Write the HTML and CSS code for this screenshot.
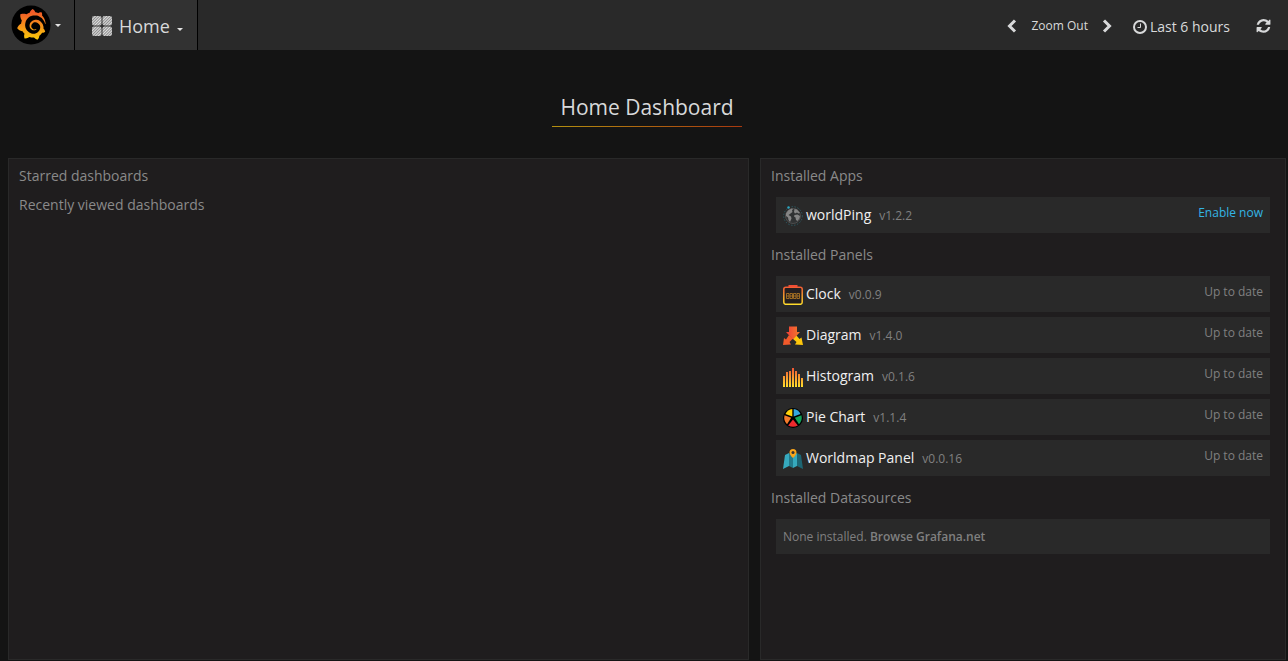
FILE: index.html
```html
<!DOCTYPE html>
<html lang="en">
<head>
<meta charset="utf-8">
<title>Home Dashboard</title>
<link rel="stylesheet" href="styles.css">
</head>
<body>
<header class="navbar">
  <button class="nav-item brand" type="button" aria-label="Main menu">
    <svg class="logo" viewBox="0 0 40 40">
      <defs><linearGradient id="flame" x1="0" y1="0" x2="0" y2="1"><stop offset=".1" stop-color="#f05a28"/><stop offset="1" stop-color="#fbca0a"/></linearGradient></defs>
      <circle cx="20" cy="20" r="19.5" fill="#000"/>
      <path transform="translate(5 4) scale(1.28)" fill="url(#flame)" d="M23.02 10.59a8.578 8.578 0 0 0-.862-3.034 8.911 8.911 0 0 0-1.789-2.445c.337-1.342-.413-2.505-.413-2.505-1.292-.08-2.113.4-2.416.62-.052-.02-.102-.044-.154-.064-.22-.089-.446-.172-.677-.247-.231-.073-.47-.14-.711-.197a9.867 9.867 0 0 0-.875-.161C14.557.753 12.94 0 12.94 0c-1.804 1.145-2.147 2.744-2.147 2.744l-.018.093c-.098.029-.2.057-.298.088-.138.042-.275.094-.413.143-.138.055-.275.107-.41.166a8.869 8.869 0 0 0-1.557.87l-.063-.029c-2.497-.955-4.716.195-4.716.195-.203 2.658.996 4.33 1.235 4.636a11.608 11.608 0 0 0-.607 2.635C1.636 12.677.953 15.014.953 15.014c1.926 2.214 4.171 2.351 4.171 2.351.003-.002.006-.002.006-.005.285.509.615.994.986 1.446.156.19.32.371.488.548-.704 2.009.099 3.68.099 3.68 2.144.08 3.553-.937 3.849-1.173a9.784 9.784 0 0 0 3.164.501h.08l.055-.003.107-.002.103-.005.003.002c1.01 1.44 2.788 1.646 2.788 1.646 1.264-1.332 1.337-2.653 1.337-2.94v-.058c0-.02-.003-.039-.003-.06.265-.187.52-.387.758-.6a7.875 7.875 0 0 0 1.415-1.7c1.43.083 2.437-.885 2.437-.885-.236-1.49-1.085-2.216-1.264-2.354l-.018-.013-.016-.013a.217.217 0 0 1-.031-.02c.008-.092.016-.18.02-.27.011-.162.016-.323.016-.48v-.253l-.005-.098-.008-.135a1.891 1.891 0 0 0-.01-.13c-.003-.042-.008-.083-.013-.125l-.016-.124-.018-.122a6.215 6.215 0 0 0-2.032-3.73 6.015 6.015 0 0 0-3.222-1.46 6.292 6.292 0 0 0-.85-.048l-.107.002h-.063l-.044.003-.104.008a4.777 4.777 0 0 0-3.335 1.695c-.332.4-.592.84-.768 1.297a4.594 4.594 0 0 0-.312 1.817l.003.091c.005.055.007.11.013.164a3.615 3.615 0 0 0 .698 1.82 3.53 3.53 0 0 0 1.827 1.282c.33.098.66.14.971.137.039 0 .078 0 .114-.002l.063-.003c.02 0 .041-.003.062-.003.034-.002.065-.007.099-.01.007 0 .018-.003.028-.003l.031-.005.06-.008a1.18 1.18 0 0 0 .112-.02c.036-.008.072-.013.109-.024a2.634 2.634 0 0 0 .914-.415c.028-.02.056-.041.085-.065a.248.248 0 0 0 .039-.35.244.244 0 0 0-.309-.06l-.078.042c-.09.044-.184.083-.283.116a2.476 2.476 0 0 1-.475.096c-.028.003-.054.006-.083.006l-.083.002c-.026 0-.054 0-.08-.002l-.102-.006h-.012l-.024.006c-.016-.003-.031-.003-.044-.006-.031-.002-.06-.007-.091-.01a2.59 2.59 0 0 1-.724-.213 2.557 2.557 0 0 1-.667-.438 2.52 2.52 0 0 1-.805-1.475 2.306 2.306 0 0 1-.029-.444l.006-.122v-.023l.002-.031c.003-.021.003-.04.005-.06a3.163 3.163 0 0 1 1.352-2.29 3.12 3.12 0 0 1 .937-.43 2.946 2.946 0 0 1 .776-.101h.06l.07.002.045.003h.026l.07.005a4.041 4.041 0 0 1 1.635.49 3.94 3.94 0 0 1 1.602 1.662 3.77 3.77 0 0 1 .397 1.414l.005.076.003.075c.002.026.002.05.002.075 0 .024.003.052 0 .07v.065l-.002.073-.008.174a6.195 6.195 0 0 1-.08.639 5.1 5.1 0 0 1-.267.927 5.31 5.31 0 0 1-.624 1.13 5.052 5.052 0 0 1-3.237 2.014 4.82 4.82 0 0 1-.649.066l-.039.003h-.287a6.607 6.607 0 0 1-1.716-.265 6.776 6.776 0 0 1-3.4-2.274 6.75 6.75 0 0 1-.746-1.15 6.616 6.616 0 0 1-.714-2.596l-.005-.083-.002-.02v-.056l-.003-.073v-.096l-.003-.104v-.07l.003-.163c.008-.22.026-.45.054-.678a8.707 8.707 0 0 1 .28-1.355c.128-.444.286-.872.473-1.277a7.04 7.04 0 0 1 1.456-2.1 5.925 5.925 0 0 1 .953-.763c.169-.111.343-.213.524-.306.089-.05.182-.091.273-.135.047-.02.093-.042.138-.062a7.177 7.177 0 0 1 .714-.267l.145-.045c.049-.015.098-.026.148-.041.098-.029.197-.052.296-.076.049-.013.1-.02.15-.033l.15-.032.151-.028.076-.013.075-.01.153-.024c.057-.01.114-.013.171-.023l.169-.021c.036-.003.073-.008.106-.01l.073-.008.036-.003.042-.002c.057-.003.114-.008.171-.01l.086-.006h.023l.037-.003.145-.007a7.999 7.999 0 0 1 1.708.125 7.917 7.917 0 0 1 2.048.68 8.253 8.253 0 0 1 1.672 1.09l.09.077.089.078c.06.052.114.107.171.159.057.052.112.106.166.16.052.055.107.107.159.164a8.671 8.671 0 0 1 1.41 1.978c.012.026.028.052.04.078l.04.078.075.156c.023.051.05.1.07.153l.065.15a8.848 8.848 0 0 1 .45 1.34.19.19 0 0 0 .201.142.186.186 0 0 0 .172-.184c.01-.246.002-.532-.024-.856z"/>
    </svg>
    <span class="caret"></span>
  </button>
  <button class="nav-item picker" type="button">
    <svg class="grid-icon" viewBox="0 0 20 20">
      <defs><pattern id="hatch" width="2" height="2" patternUnits="userSpaceOnUse" patternTransform="rotate(45)"><rect width="2" height="2" fill="#8c8c8c"/><rect width="1" height="2" fill="#e0e0e0"/></pattern></defs>
      <g fill="url(#hatch)"><rect width="9.5" height="9.5" rx="2"/><rect x="10.5" width="9.5" height="9.5" rx="2"/><rect y="10.5" width="9.5" height="9.5" rx="2"/><rect x="10.5" y="10.5" width="9.5" height="9.5" rx="2"/></g>
    </svg>
    <span class="picker-name">Home</span>
    <span class="caret"></span>
  </button>
  <nav class="time-nav" aria-label="Time range">
    <button class="time-btn" type="button" aria-label="Shift back"><svg class="chevron" viewBox="0 0 10 14"><path d="M8 1.5 2.5 7 8 12.5"/></svg></button>
    <button class="time-btn zoom" type="button">Zoom Out</button>
    <button class="time-btn" type="button" aria-label="Shift forward"><svg class="chevron" viewBox="0 0 10 14"><path d="M2 1.500 7.500 7 2 12.500"/></svg></button>
    <button class="time-btn range" type="button"><svg class="clock" viewBox="0 0 14 14"><circle cx="7" cy="7" r="6"/><path d="M7.500 3.500v4H4.500"/></svg>Last 6 hours</button>
    <button class="time-btn refresh-btn" type="button" aria-label="Refresh"><svg class="refresh" viewBox="0 0 1536 1664"><path d="M1511 928q0 5-1 7-64 268-268 434.500t-478 166.500q-146 0-282.500-55t-243.500-157l-129 129q-19 19-45 19t-45-19-19-45v-448q0-26 19-45t45-19h448q26 0 45 19t19 45-19 45l-137 137q71 66 161 102t187 36q134 0 250-65t186-179q11-17 53-117 8-23 30-23h192q13 0 22.500 9.500t9.500 22.500zm25-800v448q0 26-19 45t-45 19h-448q-26 0-45-19t-19-45 19-45l138-138q-148-137-349-137-134 0-250 65t-186 179q-11 17-53 117-8 23-30 23h-199q-13 0-22.500-9.500t-9.500-22.500v-7q65-268 270-434.500t480-166.500q146 0 284 55.500t245 156.500l130-129q19-19 45-19t45 19 19 45z"/></svg></button>
  </nav>
</header>
<main class="page">
  <h1 class="title">Home Dashboard</h1>
  <div class="columns">
    <section class="panel">
      <h2 class="heading">Starred dashboards</h2>
      <h2 class="heading">Recently viewed dashboards</h2>
    </section>
    <section class="panel">
      <h2 class="heading">Installed Apps</h2>
      <ul class="list">
        <li class="row">
          <svg class="icon" viewBox="0 0 20 20"><circle cx="10" cy="10" r="9.300" fill="none" stroke="#2e6670" stroke-width=".8" stroke-dasharray="1.500 1.500"/><circle cx="10" cy="10" r="7.500" fill="#303233" stroke="#555" stroke-width=".8"/><path fill="#858585" d="M3 7.500 5 4.500l3.500-2 1.500.5-1 1.500.5 1.500L7.500 7.500 5.500 9l2.500 1.500.5 2L7 16l-1.500-2-.5-2.500L3 10zM11.500 3l2.500.500 3 3.500-1.500.500L14 6.500 12 7.500l-1-1.500zM11.500 9l3-.500 2.500 1.500-.5 2.500-2 2.500-1.500-1-.5-2.500-1.500-1z"/><circle cx="5.500" cy="1.500" r="1.200" fill="#2ca7c2"/></svg>
          <span class="name">worldPing</span><span class="version">v1.2.2</span><a class="status enable" href="#">Enable now</a>
        </li>
      </ul>
      <h2 class="heading">Installed Panels</h2>
      <ul class="list">
        <li class="row">
          <svg class="icon" viewBox="0 0 20 20"><defs><linearGradient id="warm" x1="0" y1="0" x2="0" y2="20" gradientUnits="userSpaceOnUse"><stop stop-color="#f04e35"/><stop offset="1" stop-color="#ffe02b"/></linearGradient></defs><rect x=".8" y="2.300" width="18.400" height="17" rx="2" fill="#241f20" stroke="url(#warm)" stroke-width="1.500"/><path d="M5.500 1h9" stroke="#f04e35" stroke-width="2"/><path fill="none" stroke="#b97c25" stroke-width=".8" d="M3.500 8.500h2.500v5H3.500zM3.500 11h2.500M7 8.500h2.500v5H7zM7 11h2.500M10.500 8.500H13v5h-2.500zM10.500 11H13M14 8.500h2.500v5H14zM14 11h2.500"/></svg>
          <span class="name">Clock</span><span class="version">v0.0.9</span><span class="status">Up to date</span>
        </li>
        <li class="row">
          <svg class="icon" viewBox="0 0 20 20"><defs><linearGradient id="diag"><stop stop-color="#ee3e38"/><stop offset="1" stop-color="#f47b2b"/></linearGradient></defs><path fill="#f15a2b" d="m6 9 4 3.500-3.500 3.500L8 18.500 0 19l1-7 2 1.500z"/><path fill="#fdc70c" d="m9.500 12.500 3.500-3.500 3.500 4 2-1.500L20 19l-8-.500 1.500-2.500z"/><path fill="url(#diag)" d="M6 .500h8V6h3l-7 7.500L3 6h3z"/></svg>
          <span class="name">Diagram</span><span class="version">v1.4.0</span><span class="status">Up to date</span>
        </li>
        <li class="row">
          <svg class="icon" viewBox="0 0 20 20"><path stroke="url(#warm)" stroke-width="2" fill="none" d="M1 20V9M4 20V5M7 20V4M10 20V1M13 20V4M16 20V7M19 20v-9"/></svg>
          <span class="name">Histogram</span><span class="version">v0.1.6</span><span class="status">Up to date</span>
        </li>
        <li class="row">
          <svg class="icon" viewBox="0 0 20 20"><circle cx="10" cy="10" r="10" fill="#000"/><path fill="#ffd20a" d="M9.300 8.500 2.500 6Q4.500 1.500 9.300 1z"/><path fill="#35a8e0" d="M10.700 8.500V1q4.800.500 6.800 5z"/><path fill="#12a25a" d="m11.800 9.700 6.700-2.500q1.200 5.300-2.500 9z"/><path fill="#ee2b2e" d="m10 11.500 4.800 6q-4.800 2.500-9.600 0z"/><path fill="#f47a2b" d="M8.200 9.700 1.500 7.200q-1.200 5.300 2.500 9z"/></svg>
          <span class="name">Pie Chart</span><span class="version">v1.1.4</span><span class="status">Up to date</span>
        </li>
        <li class="row">
          <svg class="icon" viewBox="0 0 20 20"><path fill="#36a9bd" d="m2 6 4-2v13l-6 3z"/><path fill="#23798a" d="m6 4 4 3v12l-4-2z"/><path fill="#36a9bd" d="m10 7 4-3v13l-4 2z"/><path fill="#1d6573" d="m14 4 4 2 2 14-6-3z"/><path fill="#f9a51a" d="M10 0a3.500 3.500 0 0 0-3.500 3.500C6.500 6 10 9 10 9s3.500-3 3.500-5.500A3.500 3.500 0 0 0 10 0z"/><circle cx="10" cy="3.500" r="1.500" fill="#333"/></svg>
          <span class="name">Worldmap Panel</span><span class="version">v0.0.16</span><span class="status">Up to date</span>
        </li>
      </ul>
      <h2 class="heading">Installed Datasources</h2>
      <p class="row empty">None installed.&nbsp;<a class="browse" href="#">Browse Grafana.net</a></p>
    </section>
  </div>
</main>
</body>
</html>
```
FILE: styles.css
```css
* { box-sizing: border-box; }
body {
  display: flex;
  flex-direction: column;
  min-height: 100vh;
  margin: 0;
  background: #141414;
  color: #d8d9da;
  font-family: "Open Sans", sans-serif;
  font-size: 14px;
}
button {
  margin: 0;
  border: 0;
  padding: 0;
  background: none;
  color: inherit;
  font: inherit;
}
a { text-decoration: none; }
svg { flex: none; }

.navbar {
  display: flex;
  height: 50px;
  background: #292929;
}
.nav-item {
  display: flex;
  align-items: center;
  border-right: 1px solid #000;
  background: #323232;
}
.brand { gap: 4px; padding: 0 13px 0 11px; }
.picker { gap: 7px; padding: 2px 14px 0 17px; }
.logo { width: 40px; height: 40px; }
.grid-icon { width: 20px; height: 20px; }
.picker-name { font-size: 18px; line-height: 24px; }
.caret {
  border: 3px solid transparent;
  border-top-color: #e3e3e3;
  border-bottom: 0;
}
.picker .caret { margin-top: 6px; }
.time-nav {
  display: flex;
  align-items: center;
  margin-left: auto;
  padding: 2px 17px 0 0;
}
.time-btn { display: flex; align-items: center; line-height: 20px; }
.zoom { padding: 0 14px; font-size: 12px; }
.range { gap: 3px; padding: 2px 26px 0 21px; }
.chevron { width: 10px; height: 14px; fill: none; stroke: #d8d9da; stroke-width: 3; }
.clock { width: 14px; height: 14px; fill: none; stroke: #d8d9da; stroke-width: 2; }
.clock path { stroke-width: 1; }
.refresh { width: 15px; height: 15px; fill: #d8d9da; }

.page {
  display: flex;
  flex: 1;
  flex-direction: column;
  padding: 41px 2px 1px 8px;
}
.title {
  align-self: center;
  margin: 0 0 31px;
  padding: 0 8px 2px;
  border-bottom: 1px solid;
  border-image: linear-gradient(90deg, #b39010, #a8380f) 1;
  font-size: 21px;
  font-weight: 400;
  line-height: 33px;
}
.columns {
  display: grid;
  flex: 1;
  grid-template-columns: 741fr 526fr;
  gap: 11px;
}
.panel {
  border: 1px solid #292929;
  padding: 7px 15px 16px 10px;
  background: #1f1d1e;
}
.heading {
  margin: 0 0 9px;
  color: #8a8a8a;
  font-size: 14px;
  font-weight: 400;
  line-height: 20px;
}
.list {
  display: grid;
  gap: 5px;
  margin: 0 0 12px;
  padding: 0 0 0 5px;
  list-style: none;
}
.heading + .list { margin-top: 11px; }
.row {
  display: flex;
  align-items: center;
  height: 36px;
  padding: 0 7px;
  background: #292929;
}
.icon { width: 20px; height: 20px; margin: 2px 3px 0 0; }
.name { margin-bottom: 2px; color: #f0f0f0; font-weight: 500; }
.version { margin-left: 8px; color: #808080; font-size: 12px; }
.status { margin: 0 0 6px auto; color: #808080; font-size: 12px; }
.enable { color: #33b5e5; }
.empty { height: 35px; margin: 11px 0 0 5px; color: #808080; font-size: 12px; }
.browse { color: inherit; font-weight: 600; }
```
